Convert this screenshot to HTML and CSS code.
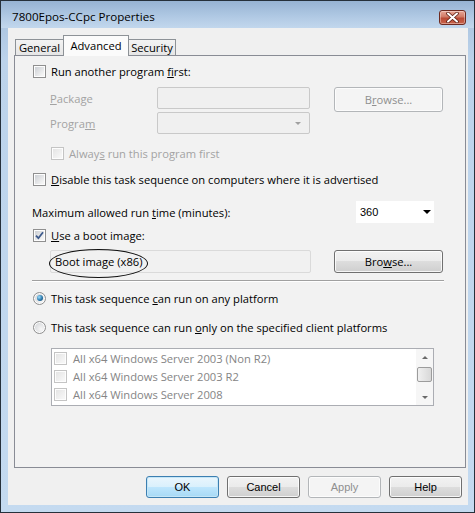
FILE: index.html
```html
<!DOCTYPE html>
<html>
<head>
<meta charset="utf-8">
<title>7800Epos-CCpc Properties</title>
<link rel="stylesheet" href="styles.css">
</head>
<body>
<div class="window">
  <div class="titlebar">
    <span class="title">7800Epos-CCpc Properties</span>
    <span class="close">
      <svg width="13" height="11" viewBox="0 0 13 11"><path d="M2 1.5 L11 9.5 M11 1.5 L2 9.5" stroke="#5a1d14" stroke-width="3.6" stroke-linecap="round"/><path d="M2 1.5 L11 9.5 M11 1.5 L2 9.5" stroke="#ffffff" stroke-width="2" stroke-linecap="round"/></svg>
    </span>
  </div>
  <div class="client">
    <div class="tabs">
      <div class="tab t-general">General</div>
      <div class="tab t-advanced active">Advanced</div>
      <div class="tab t-security">Security</div>
    </div>
    <div class="panel">
      <div class="row r-run"><span class="cb"></span><span class="txt">Run another program <u>f</u>irst:</span></div>
      <div class="pkg-grid">
        <span class="lbl dis"><u>P</u>ackage</span>
        <span class="field dis-field"></span>
        <span class="btn disabled pkg-browse">B<u>r</u>owse...</span>
        <span class="lbl dis">Progra<u>m</u></span>
        <span class="field dis-field select"><i class="arrow gray"></i></span>
      </div>
      <div class="row r-always"><span class="cb dis-cb"></span><span class="txt dis">Alway<u>s</u> run this program first</span></div>
      <div class="row r-disable"><span class="cb"></span><span class="txt"><u>D</u>isable this task sequence on computers where it is advertised</span></div>
      <div class="row r-max">
        <span class="txt max-label">Maximum allowed run <u>t</u>ime (minutes):</span>
        <span class="combo"><span class="combo-val">360</span><i class="arrow"></i></span>
      </div>
      <div class="row r-boot"><span class="cb checked"><svg width="9" height="9" viewBox="0 0 9 9"><path d="M1 4.6 L3.4 7.2 L8 1.3" fill="none" stroke="#3d5a8c" stroke-width="1.8"/></svg></span><span class="txt"><u>U</u>se a boot image:</span></div>
      <div class="row r-bootfield">
        <span class="field boot-field">Boot image (x86)<span class="oval"></span></span>
        <span class="btn">Bro<u>w</u>se...</span>
      </div>
      <div class="sep"></div>
      <div class="row r-radio1"><span class="rb on"></span><span class="txt">This task sequence <u>c</u>an run on any platform</span></div>
      <div class="row r-radio2"><span class="rb"></span><span class="txt">This task sequence can run <u>o</u>nly on the specified client platforms</span></div>
      <div class="listbox">
        <div class="items">
          <div class="item"><span class="cb dis-cb"></span><span>All x64 Windows Server 2003 (Non R2)</span></div>
          <div class="item"><span class="cb dis-cb"></span><span>All x64 Windows Server 2003 R2</span></div>
          <div class="item"><span class="cb dis-cb"></span><span>All x64 Windows Server 2008</span></div>
        </div>
        <div class="scrollbar">
          <span class="sb-arrow"><i class="tri up"></i></span>
          <span class="sb-track"><span class="thumb"></span></span>
          <span class="sb-arrow"><i class="tri down"></i></span>
        </div>
      </div>
    </div>
    <div class="buttons">
      <span class="btn dlg default">OK</span>
      <span class="btn dlg">Cancel</span>
      <span class="btn dlg disabled">Apply</span>
      <span class="btn dlg">Help</span>
    </div>
  </div>
</div>
</body>
</html>
```

FILE: styles.css
```css
* { box-sizing: border-box; }
html, body { margin: 0; padding: 0; }
body {
  width: 475px;
  height: 513px;
  overflow: hidden;
  font-family: "Open Sans", "Noto Sans", sans-serif;
  font-size: 11.2px;
  color: #000;
  background: #c3d8ee;
}
u { text-decoration: underline; text-underline-offset: 1px; }

.window {
  width: 475px;
  height: 513px;
  border: 1px solid #26303b;
  background: linear-gradient(#a4bedb, #bcd3eb 60px, #c4daf0);
  display: flex;
  flex-direction: column;
}

.titlebar {
  height: 27px;
  display: flex;
  align-items: center;
  justify-content: space-between;
  padding: 0 8px 0 11px;
  background: linear-gradient(#97b3d3, #afc8e3 55%, #c2d7ed);
}
.title { font-size: 11.6px; line-height: 18px; padding-top: 4px; }
.close {
  width: 27px;
  height: 15px;
  margin-top: 5px;
  border: 1px solid #6e2a20;
  border-radius: 3px;
  background: linear-gradient(#e9a797, #d07a66 45%, #b94a35 55%, #c9644c);
  box-shadow: inset 0 0 0 1px rgba(255,255,255,0.35);
  display: flex;
  align-items: center;
  justify-content: center;
}

.client {
  flex: 1;
  margin: 0 6px 7px 7px;
  background: #f0f0f0;
  padding: 7px 2px 0 6px;
  display: flex;
  flex-direction: column;
}

.tabs {
  height: 20px;
  display: flex;
  align-items: flex-end;
  padding-left: 1px;
  position: relative;
  z-index: 1;
}
.tab {
  height: 16px;
  padding: 0;
  border: 1px solid #8d9297;
  border-bottom: none;
  background: linear-gradient(#f3f3f3, #e6e6e6);
  line-height: 15px;
  text-align: center;
  white-space: nowrap;
}
.t-general { width: 49px; margin-right: -1px; }
.tab.active {
  height: 21px;
  margin-bottom: -1px;
  width: 66px;
  background: #fbfbfb;
  line-height: 19px;
  position: relative;
  z-index: 2;
  margin-right: -1px;
}
.t-security { width: 48px; }

.panel {
  height: 413px;
  border: 1px solid #898c95;
  background: #f2f2f2;
  padding: 0 22px 0 18px;
  display: flex;
  flex-direction: column;
}

.row { display: flex; align-items: center; height: 14px; }
.row .txt { margin-left: 5px; white-space: nowrap; }
.dis { color: #a3a3a3; }

.cb {
  width: 13px;
  height: 13px;
  flex: none;
  border: 1px solid #8f8f8f;
  padding: 1px;
  background: linear-gradient(135deg, #c7cbd0, #f4f4f4 80%);
  background-clip: content-box;
  box-shadow: inset 0 0 0 1px #fdfdfd;
  display: flex;
  align-items: center;
  justify-content: center;
}
.cb.dis-cb {
  border-color: #c4c4c4;
  background: linear-gradient(135deg, #e2e2e2, #f6f6f6 80%);
  background-clip: content-box;
}

.rb {
  width: 13px;
  height: 13px;
  flex: none;
  border: 1px solid #8f8f8f;
  border-radius: 50%;
  background: radial-gradient(circle at 65% 65%, #f7f7f7, #d4d6d9 80%);
  box-shadow: inset 0 0 0 1px #fdfdfd;
  display: flex;
  align-items: center;
  justify-content: center;
}
.rb.on::after {
  content: "";
  width: 6px;
  height: 6px;
  border-radius: 50%;
  background: radial-gradient(circle at 35% 35%, #9fe0ff, #2c79ac 55%, #123d5e);
}

.r-run { margin-top: 8px; }

.pkg-grid {
  margin-top: 9px;
  padding-left: 17px;
  display: grid;
  grid-template-columns: 107px 153px 1fr;
  grid-template-rows: 22px 22px;
  row-gap: 3px;
}
.lbl { align-self: center; }
.field {
  height: 22px;
  border: 1px solid #c9c9c9;
  border-radius: 2px;
  background: #f0f0f0;
  position: relative;
}
.select { display: flex; align-items: center; justify-content: flex-end; padding-right: 8px; }
.arrow {
  width: 0;
  height: 0;
  border-left: 4px solid transparent;
  border-right: 4px solid transparent;
  border-top: 4px solid #000;
}
.arrow.gray { border-top-color: #a0a0a0; border-left-width: 3px; border-right-width: 3px; border-top-width: 3px; }

.btn {
  height: 24px;
  border: 1px solid #707070;
  border-radius: 3px;
  background: linear-gradient(#f2f2f2, #ebebeb 50%, #dddddd 50%, #cfcfcf);
  box-shadow: inset 0 0 0 1px rgba(255,255,255,0.8);
  display: flex;
  align-items: center;
  justify-content: center;
  white-space: nowrap;
}
.btn.disabled {
  border-color: #b3b6b9;
  background: #f4f4f4;
  color: #8f8f8f;
  box-shadow: inset 0 0 0 1px #fcfcfc;
}
.pkg-browse { justify-self: end; width: 109px; align-self: start; height: 25px; }

.r-always { margin-top: 12px; padding-left: 18px; }
.r-disable { margin-top: 12px; }

.r-max {
  margin-top: 15px;
  height: 22px;
  justify-content: space-between;
  padding-right: 9px;
}
.r-max .max-label { margin-left: -1px; }
.combo {
  width: 78px;
  height: 22px;
  background: #fff;
  display: flex;
  align-items: center;
  justify-content: space-between;
  padding: 0 3px 0 4px;
  font-family: "Liberation Sans", sans-serif;
  font-size: 11px;
}

.r-boot { margin-top: 5px; }

.r-bootfield {
  margin-top: 8px;
  height: 23px;
  justify-content: space-between;
  padding-left: 17px;
}
.boot-field {
  width: 261px;
  height: 23px;
  border-color: #dadada;
  background: #f1f1f1;
  padding-left: 4px;
  display: flex;
  align-items: center;
}
.oval {
  position: absolute;
  left: -2px;
  top: -2px;
  width: 99px;
  height: 29px;
  border: 1px solid #111;
  border-radius: 50%;
}
.r-bootfield .btn { width: 109px; height: 23px; }

.sep {
  margin: 7px -1px 0 -1px;
  height: 2px;
  border-top: 1px solid #a0a0a0;
  border-bottom: 1px solid #ffffff;
}

.r-radio1 { margin-top: 9px; }
.r-radio2 { margin-top: 15px; }

.listbox {
  margin-top: 14px;
  margin-left: 18px;
  width: 383px;
  height: 58px;
  border: 1px solid #abadb3;
  background: #fff;
  display: flex;
}
.items { flex: 1; }
.item {
  height: 18px;
  display: flex;
  align-items: center;
  padding-left: 2px;
  color: #858585;
  white-space: nowrap;
}
.item .cb { margin-right: 6px; }
.scrollbar {
  width: 17px;
  display: flex;
  flex-direction: column;
  background: #f6f6f6;
}
.sb-arrow { height: 16px; display: flex; align-items: center; justify-content: center; }
.sb-track { flex: 1; display: flex; flex-direction: column; padding: 2px 1px 0 1px; }
.thumb {
  height: 15px;
  border: 1px solid #9c9c9c;
  border-radius: 2px;
  background: linear-gradient(90deg, #f0f0f0, #d8d8d8);
}
.tri { width: 0; height: 0; border-left: 3px solid transparent; border-right: 3px solid transparent; }
.tri.up { border-bottom: 3px solid #6a6a6a; }
.tri.down { border-top: 3px solid #6a6a6a; }

.buttons {
  margin-top: 8px;
  display: flex;
  justify-content: flex-end;
  gap: 8px;
  padding-right: 4px;
}
.btn.dlg {
  width: 73px;
  height: 22px;
  font-family: "Liberation Sans", sans-serif;
  font-size: 11px;
}
.btn.default {
  border-color: #3c7fb1;
  box-shadow: inset 0 0 0 1px #c5e6f7;
  background: linear-gradient(#eaf6fd, #d9f0fc 50%, #bee6fd 50%, #a7d9f5);
}
```
